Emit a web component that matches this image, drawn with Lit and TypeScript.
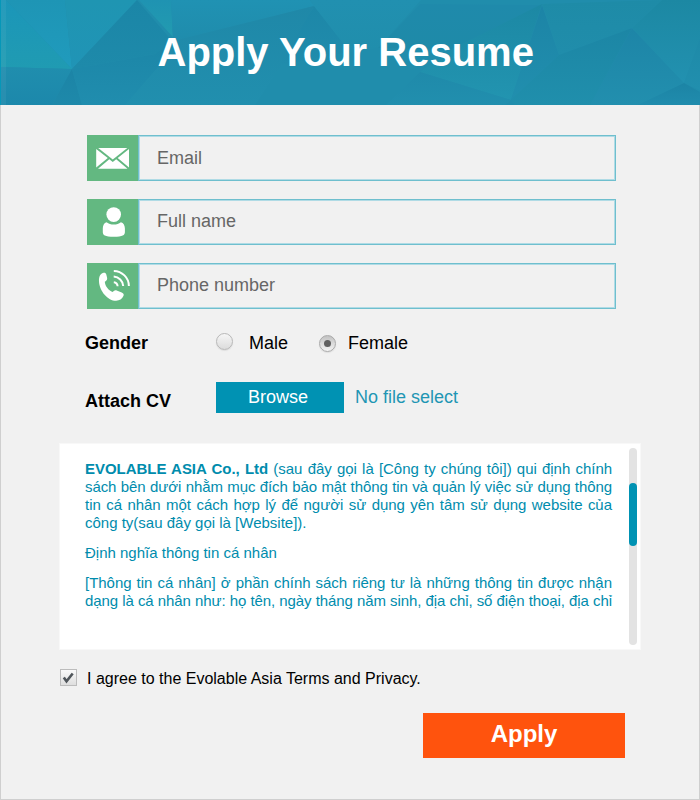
import { LitElement, html, css, svg } from "lit";
import { customElement, property } from "lit/decorators.js";

const icons = {
  mail: svg`<svg width="51" height="46" viewBox="0 0 51 46"><g fill="#fff">
    <path d="M11.200 13h29.100L25.750 24.400z"/><path d="M9.200 13.900l11.600 9.100L9.200 32.500zM42 13.900L30.700 23 42 32.500z"/>
    <path d="M22.300 24.200l3.450 2.900 3.450-2.900 11.300 9.500H11z"/></g></svg>`,
  user: svg`<svg width="51" height="46" viewBox="0 0 51 46"><g fill="#fff">
    <ellipse cx="26.7" cy="15.6" rx="7.3" ry="7.4"/>
    <path d="M19.6 23.2c2 1.7 4.4 2.4 7.2 2.4s5.100-.7 7.100-2.400c2.700.6 4 3.200 4 6.400v3.400c0 3.200-2.100 4.700-11.100 4.700s-11-1.500-11-4.700v-3.400c0-3.200 1.200-5.800 3.800-6.400z"/></g></svg>`,
  phone: svg`<svg width="51" height="46" viewBox="0 0 51 46">
    <path fill="#fff" d="M15.800 10.100c1.900-.6 3.100 0 3.500 1.400l.8 3.300c.3 1.700-.3 2.700-1.500 3.400l-.8.500c.3 4.200 3.600 8.600 7.800 10.300l1.200-1.100c.9-.8 1.900-.9 2.900-.5l5 2c1.900.8 2.500 2 1.700 3.700-1.300 2.800-3.900 4.700-7.300 4.700C21 37.800 12.400 28 12 18.400c-.2-4 .9-7.300 3.800-8.300z"/>
    <g fill="none" stroke="#fff" stroke-width="2"><path d="M26.800 19.200a4.300 4.300 0 0 1 3.800 4"/><path d="M26.700 13.600a10 10 0 0 1 9.500 9.400"/><path d="M26.800 7.900a15.300 15.300 0 0 1 15.100 15.100"/></g></svg>`,
};

/** Header facets: polygon points, top colour, bottom colour. */
const facets: [string, string, string][] = [
  ["0,0 6,0 72,69 0,67", "#1b96b9", "#209bb2"],
  ["6,0 65,0 72,69", "#1e95b5", "#209bbd"],
  ["65,0 137,0 72,69", "#1f95b2", "#2094b6"],
  ["137,0 173,42 155,54 72,69", "#1b86a7", "#1e8aaa"],
  ["139,0 171,0 173,37", "#1f93b2", "#229bb0"],
  ["171,0 310,0 314,6 173,41", "#2092b3", "#1f8cac"],
  ["0,67 72,69 52,105 0,105", "#208eae", "#1c88ab"],
  ["72,69 82,105 52,105", "#1c84a6", "#1e89aa"],
  ["72,69 155,54 173,41 160,65 125,105 82,105", "#1c86a7", "#208dae"],
  ["173,41 314,6 285,60 255,105 125,105 160,65", "#1f88a8", "#218fae"],
  ["314,6 350,52 280,65", "#1d87a8", "#208cac"],
  ["310,0 421,0 378,48 350,52 314,6", "#2190b0", "#208eac"],
  ["420,4 542,5 450,50 378,48", "#1f8aab", "#1e8aa8"],
  ["542,4 450,50 420,72 511,100", "#1c88a4", "#2294b0"],
  ["542,5 559,55 511,100", "#1c84a6", "#218fae"],
  ["420,72 511,100 505,105 386,105", "#1f8aaa", "#218fae"],
  ["542,4 629,1 662,0 632,28 559,55", "#1e8ba7", "#208dab"],
  ["632,28 559,55 511,100 515,105 590,105", "#1c86a5", "#208fac"],
  ["632,28 684,83 638,105 590,105", "#1d85a7", "#228fae"],
  ["662,0 700,0 700,38 684,83 632,28", "#1c88a3", "#2291b0"],
  ["700,38 700,90 684,83", "#1e8aa8", "#218fae"],
  ["684,83 700,92 700,105 638,105", "#1c84a5", "#208cad"],
];

@customElement("resume-field")
class ResumeField extends LitElement {
  @property() icon: keyof typeof icons = "mail";
  @property() label = "";
  static styles = css`
    :host { display: flex; height: 46px; }
    .icon { width: 51px; background: #63b881; }
    .icon svg { display: block; }
    .box {
      flex: 1; box-sizing: border-box; border: 1px solid #6fbfce;
      box-shadow: inset 0 0 0 1px #b0dbe5; padding-left: 18px;
      font-size: 18px; line-height: 43px; color: #666;
    }
    :host([icon="mail"]) .box { line-height: 45px; }
  `;
  render() {
    return html`<div class="icon">${icons[this.icon]}</div><div class="box">${this.label}</div>`;
  }
}

@customElement("app-root")
class AppRoot extends LitElement {
  static styles = css`
    :host {
      display: block; box-sizing: border-box; width: 700px; height: 800px; overflow: hidden;
      background: #f1f1f1; font-family: "Liberation Sans", Arial, sans-serif; color: #000;
    }
    .page { box-sizing: border-box; height: 800px; border: 1px solid #cfcfcf; border-top: 0; }
    header { display: grid; height: 105px; margin: 0 -1px; background: #208dac; }
    header > * { grid-area: 1 / 1; }
    h1 { margin: 0; padding-left: 157.500px; font-size: 40px; line-height: 105px; color: #fff; white-space: nowrap; z-index: 1; }
    .fields { display: grid; gap: 18px; margin: 30px 83px 0 86px; }
    .row { display: flex; margin-left: 84px; font-size: 18px; white-space: nowrap; }
    .row b { width: 131px; }
    .gender { margin-top: 23px; height: 22px; line-height: 22px; }
    .radio {
      box-sizing: border-box; width: 17px; height: 17px; border-radius: 50%; margin-top: 1px;
      border: 1px solid #b8b8b8; background: linear-gradient(#f6f6f6, #dcdcdc); box-shadow: 0 1px 1px #ddd;
    }
    .male { width: 70px; margin-left: 16px; }
    .on {
      display: grid; place-items: center; margin-top: 3px; border-color: #aaa;
      background: linear-gradient(#c2c2c2, #f4f4f4);
    }
    .on::after { content: ""; width: 7px; height: 7px; border-radius: 50%; background: #606060; }
    .female { margin-left: 12px; }
    .attach { margin-top: 28px; height: 31px; line-height: 31px; }
    .attach b { padding-top: 4px; box-sizing: border-box; }
    .browse { width: 128px; height: 31px; background: #0092b3; color: #fff; text-align: center; text-indent: -4px; line-height: 30px; }
    .none { margin-left: 11px; color: #1f96b4; line-height: 30px; }
    .terms {
      box-sizing: border-box; display: flex; justify-content: space-between; width: 582px; height: 207px;
      margin: 30px 0 0 58px; padding: 5px 4px 5px 26px; background: #fff;
      box-shadow: inset 0 0 0 1px #f8f8f8;
    }
    .copy { width: 527px; padding-top: 12px; font-size: 15px; line-height: 18px; color: #008cad; }
    p { margin: 0 0 12px; }
    .line { display: block; white-space: nowrap; }
    .full { text-align-last: justify; letter-spacing: -0.03px; }
    .tight { letter-spacing: -0.080px; }
    .track { width: 8px; border-radius: 4px; background: #e3e3e3; padding-top: 35px; box-sizing: border-box; height: 197px; }
    .thumb { height: 63px; border-radius: 4px; background: #0092b3; }
    .agree { display: flex; margin: 18px 0 0 59px; height: 20px; font-size: 16px; line-height: 22px; white-space: nowrap; }
    .check {
      box-sizing: border-box; width: 17px; height: 17px; margin: 1px 10px 0 0; border: 1px solid #bcbcbc;
      background: linear-gradient(#fafafa, #dedede);
    }
    .check svg { display: block; }
    .apply {
      width: 202px; height: 45px; margin: 25px 0 0 422px; background: #ff530d; color: #fff;
      font-size: 24px; font-weight: bold; line-height: 41px; text-align: center;
    }
  `;
  render() {
    return html`<div class="page">
      <header>
        <svg width="700" height="105" viewBox="0 0 700 105">
          ${facets.map(([points, top, bottom], i) => svg`
            <linearGradient id="f${i}" x2="0" y2="1"><stop stop-color=${top}/><stop offset="1" stop-color=${bottom}/></linearGradient>
            <polygon points=${points} fill="url(#f${i})"/>`)}
          <path fill="#0697b8" d="M0 0h1v105H0z"/>
          <path fill="#fff" fill-opacity=".05" d="M1 0h5v105H1z"/>
        </svg>
        <h1>Apply Your Resume</h1>
      </header>
      <div class="fields">
        <resume-field icon="mail" label="Email"></resume-field>
        <resume-field icon="user" label="Full name"></resume-field>
        <resume-field icon="phone" label="Phone number"></resume-field>
      </div>
      <div class="row gender"><b>Gender</b><i class="radio"></i><span class="male">Male</span><i class="radio on"></i><span class="female">Female</span></div>
      <div class="row attach"><b>Attach CV</b><div class="browse">Browse</div><span class="none">No file select</span></div>
      <div class="terms">
        <div class="copy">
          <p>
            <span class="line full"><b>EVOLABLE ASIA Co., Ltd</b> (sau đây gọi là [Công ty chúng tôi]) qui định chính</span>
            <span class="line full tight">sách bên dưới nhằm mục đích bảo mật thông tin và quản lý việc sử dụng thông</span>
            <span class="line full">tin cá nhân một cách hợp lý để người sử dụng yên tâm sử dụng website của</span>
            <span class="line">công ty(sau đây gọi là [Website]).</span>
          </p>
          <p>Định nghĩa thông tin cá nhân</p>
          <p>
            <span class="line full">[Thông tin cá nhân] ở phần chính sách riêng tư là những thông tin được nhận</span>
            <span class="line full tight">dạng là cá nhân như: họ tên, ngày tháng năm sinh, địa chỉ, số điện thoại, địa chỉ</span>
          </p>
        </div>
        <div class="track"><div class="thumb"></div></div>
      </div>
      <div class="agree"><div class="check"><svg width="15" height="15" viewBox="0 0 15 15"><path d="M2.800 7.500l2.700 3.800 6.200-7.800" fill="none" stroke="#50565b" stroke-width="2.600"/></svg></div>I agree to the Evolable Asia Terms and Privacy.</div>
      <div class="apply">Apply</div>
    </div>`;
  }
}
